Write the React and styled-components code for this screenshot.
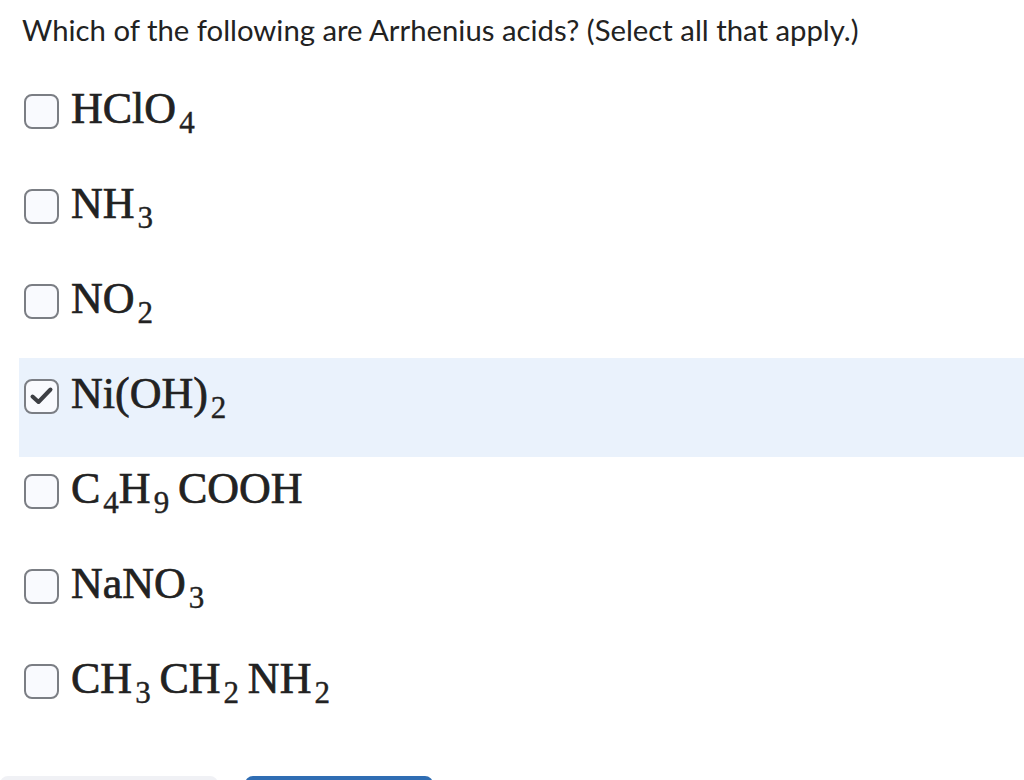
import styled, { createGlobalStyle } from 'styled-components';

const GlobalStyle = createGlobalStyle`
  html, body {
    margin: 0;
    padding: 0;
    background: #ffffff;
  }
  body {
    font-family: Lato, "Noto Sans", sans-serif;
    color: #222222;
    overflow: hidden;
  }
`;

const options = [
  { id: 'a', parts: [['HClO'], ['4', true]] },
  { id: 'b', parts: [['NH'], ['3', true]] },
  { id: 'c', parts: [['NO'], ['2', true]] },
  { id: 'd', parts: [['Ni(OH)'], ['2', true]], checked: true },
  { id: 'e', parts: [['C'], ['4', true], ['H'], ['9', true], ['\u2009COOH']] },
  { id: 'f', parts: [['NaNO'], ['3', true]] },
  { id: 'g', parts: [['CH'], ['3', true], ['\u2009CH'], ['2', true], ['\u2009NH'], ['2', true]] },
];

function CheckMark(){
  return (
    <svg width="25" height="25" viewBox="0 0 25 25">
      <path d="M3.5 12.5 L9.5 18 L21.5 5.5" fill="none" stroke="#3d3f44" strokeWidth="4" strokeLinecap="round" strokeLinejoin="round" />
    </svg>
  );
}

function App(){
  return (
    <Page>
      <GlobalStyle />
      <Question>Which of the following are Arrhenius acids? (Select all that apply.)</Question>
      <OptionList>
        {options.map(opt => (
          <OptionRow key={opt.id} $checked={opt.checked}>
            <Box $checked={opt.checked}>
              {opt.checked && <CheckMark />}
            </Box>
            <Formula>
              {opt.parts.map(([txt, sub], i) => sub
                ? <Sub key={i}>{txt}</Sub>
                : <span key={i}>{txt}</span>
              )}
            </Formula>
          </OptionRow>
        ))}
      </OptionList>
      <Footer>
        <GhostButton />
        <PrimaryButton />
      </Footer>
    </Page>
  );
};

export default App;

const Page = styled.div`
  width: 1024px;
  height: 780px;
  overflow: hidden;
  display: flex;
  flex-direction: column;
`;

const Question = styled.h1`
  margin: 0;
  padding: 12px 0 0 22px;
  height: 73px;
  box-sizing: border-box;
  flex-shrink: 0;
  font-family: Lato, "Noto Sans", sans-serif;
  font-weight: 400;
  font-size: 29.3px;
  line-height: 36px;
  color: #222222;
`;

const OptionList = styled.div`
  margin-left: 19px;
  display: flex;
  flex-direction: column;
`;

const OptionRow = styled.div`
  height: ${ ({ $checked }) => $checked ? '99px' : '95px' };
  margin-bottom: ${ ({ $checked }) => $checked ? '-4px' : '0' };
  box-sizing: border-box;
  padding: 14px 5px 0;
  display: flex;
  align-items: flex-start;
  gap: 12px;
  background: ${ ({ $checked }) => $checked ? '#eaf2fc' : 'transparent' };
`;

const Box = styled.div`
  width: 35px;
  height: 35px;
  margin-top: 7px;
  flex-shrink: 0;
  box-sizing: border-box;
  border: 2px solid #7b7e84;
  border-radius: 8px;
  background: #f9fafe;
  display: flex;
  justify-content: center;
  align-items: center;
`;

const Formula = styled.div`
  font-family: "Liberation Serif", "DejaVu Serif", serif;
  font-size: 44px;
  line-height: 44px;
  color: #222222;
  -webkit-text-stroke: 0.7px #222222;
  white-space: nowrap;
`;

const Sub = styled.span`
  font-size: 31px;
  position: relative;
  top: 10px;
  margin-left: 3px;
  -webkit-text-stroke: 0.4px #222222;
`;

const Footer = styled.div`
  margin-top: auto;
  height: 4px;
  display: flex;
  gap: 27px;
`;

const GhostButton = styled.div`
  width: 218px;
  height: 40px;
  border-radius: 8px;
  background: #f0f1f5;
`;

const PrimaryButton = styled.div`
  width: 188px;
  height: 40px;
  border-radius: 8px;
  background: #2f6db3;
`;
